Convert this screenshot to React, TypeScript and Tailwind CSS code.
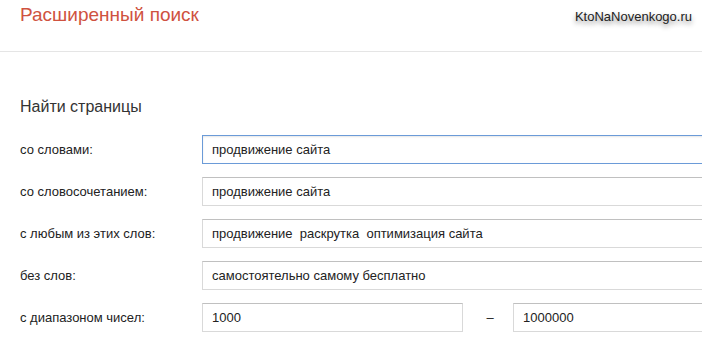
import React from "react";

const rows = [
  { label: "со словами:", value: "продвижение сайта", focused: true },
  { label: "со словосочетанием:", value: "продвижение сайта" },
  { label: "с любым из этих слов:", value: "продвижение  раскрутка  оптимизация сайта" },
  { label: "без слов:", value: "самостоятельно самому бесплатно" },
];

function Field({ value, focused, width }: { value: string; focused?: boolean; width: string }) {
  return (
    <div
      className={
        (focused
          ? "border border-[#6b9bd8] shadow-[inset_0_1px_2px_rgba(0,0,0,0.1)] "
          : "border border-[#d9d9d9] border-t-[#c0c0c0] ") +
        width +
        " h-[29px] flex items-center pl-[9px] bg-white text-[13px] text-[#222] whitespace-pre"
      }
    >
      {value}
    </div>
  );
}

export default function App() {
  return (
    <div className="w-[702px] h-[355px] overflow-hidden bg-white font-['Liberation_Sans',Arial,sans-serif]">
      <div className="h-[52px] border-b border-[#e5e5e5] flex items-start justify-between pl-[20px] pr-[10px]">
        <div className="text-[19px] leading-[24px] text-[#cf5240] mt-[3px]">Расширенный поиск</div>
        <div className="text-[13px] leading-[16px] text-[#222] mt-[9px] [text-shadow:0_3px_5px_rgba(0,0,0,0.45)]">
          KtoNaNovenkogo.ru
        </div>
      </div>
      <div className="pl-[20px]">
        <div className="text-[16px] leading-[20px] text-[#333] mt-[45px]">Найти страницы</div>
        <div className="mt-[18px] flex flex-col gap-[13px]">
          {rows.map((r) => (
            <div key={r.label} className="flex items-center">
              <div className="w-[182px] shrink-0 text-[13px] text-[#222]">{r.label}</div>
              <Field value={r.value} focused={r.focused} width="w-[520px] shrink-0" />
            </div>
          ))}
          <div className="flex items-center">
            <div className="w-[182px] shrink-0 text-[13px] text-[#222]">с диапазоном чисел:</div>
            <Field value="1000" width="w-[261px] shrink-0" />
            <div className="w-[50px] shrink-0 text-center text-[13px] text-[#222] pl-[4px]">–</div>
            <Field value="1000000" width="w-[200px] shrink-0" />
          </div>
        </div>
      </div>
    </div>
  );
}
